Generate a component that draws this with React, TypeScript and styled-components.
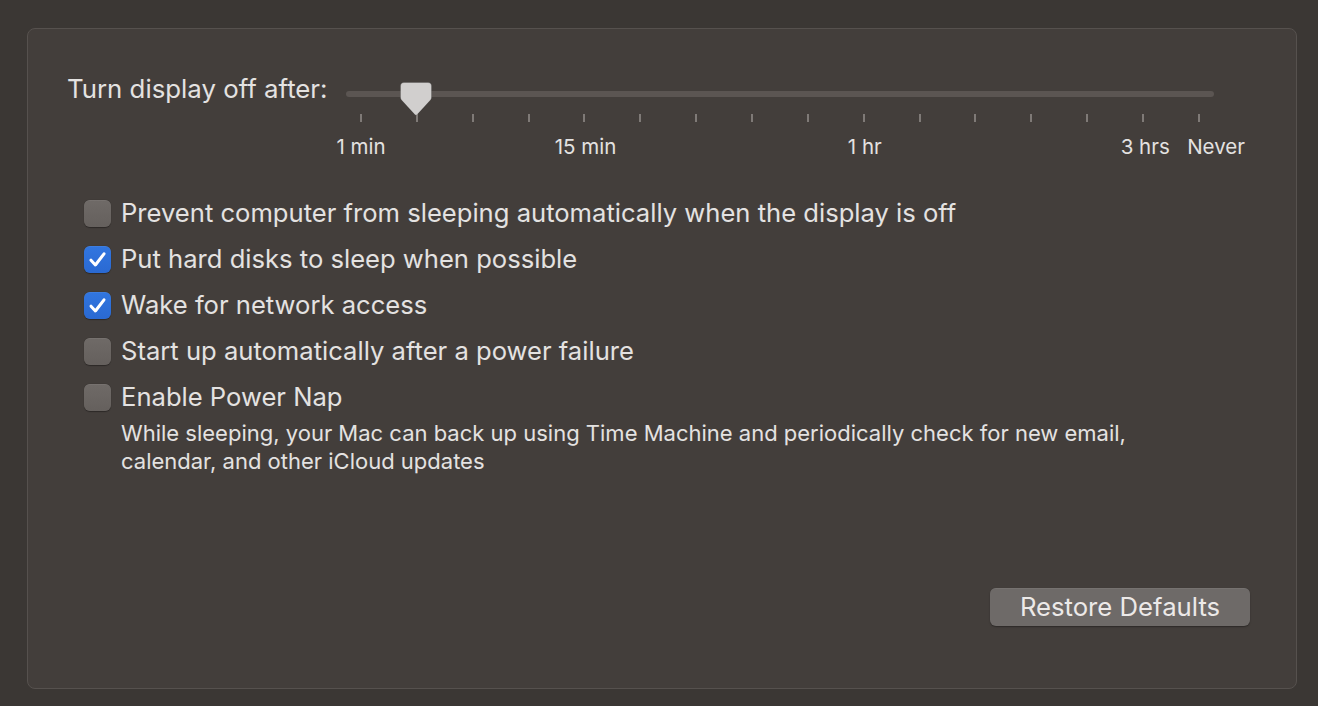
import React from "react";
import styled, { createGlobalStyle } from "styled-components";

const Global = createGlobalStyle`
  html, body { margin: 0; padding: 0; background: #3b3734; }
  body { font-family: Inter, "Noto Sans", sans-serif; color: #e4e2e1; -webkit-font-smoothing: antialiased; }
  * { box-sizing: border-box; }
`;

const Page = styled.div`
  width: 1318px;
  height: 706px;
  padding: 28px 21px 17px 27px;
  background: #3b3734;
  display: flex;
`;

const Panel = styled.section`
  flex: 1;
  display: flex;
  flex-direction: column;
  background: #433e3b;
  border: 1px solid #56514e;
  border-radius: 8px;
  padding: 46px 46px 62px 39px;
`;

const SliderRow = styled.div`
  display: flex;
  align-items: flex-start;
`;

const SliderLabel = styled.div`
  width: 279px;
  font-size: 25.8px;
  line-height: 28px;
  white-space: nowrap;
`;

const Slider = styled.div`
  position: relative;
  width: 868px;
  height: 80px;
  margin-top: 5px;
`;

const Track = styled.div`
  margin-top: 11px;
  height: 6px;
  border-radius: 3px;
  background: #5b5552;
`;

const Ticks = styled.div`
  display: flex;
  justify-content: space-between;
  width: 840px;
  margin: 17px 0 0 14px;
`;

const Tick = styled.span`
  width: 2px;
  height: 8px;
  background: #7f7a77;
`;

const TickLabel = styled.span`
  position: absolute;
  top: 55px;
  transform: translateX(-50%);
  font-size: 20.5px;
  line-height: 24px;
  white-space: nowrap;
  color: #e4e2e1;
`;

const Thumb = styled.svg`
  position: absolute;
  left: 54px;
  top: 2px;
  width: 32px;
  height: 34px;
  overflow: visible;
`;

const CheckList = styled.div`
  display: flex;
  flex-direction: column;
  margin: 30px 0 0 17px;
`;

const Row = styled.label`
  display: flex;
  align-items: center;
  height: 46px;
  gap: 10px;
  font-size: 25.6px;
  white-space: nowrap;
`;

const RowText = styled.span`
  margin-top: -2px;
`;

const Box = styled.span<{ $checked?: boolean }>`
  width: 27px;
  height: 27px;
  border-radius: 6px;
  display: flex;
  align-items: center;
  justify-content: center;
  flex: none;
  background: ${(p) =>
    p.$checked
      ? "linear-gradient(#3176e0, #2a69d2)"
      : "linear-gradient(#6f6a67, #65605d)"};
  box-shadow: 0 0.5px 1px rgba(0, 0, 0, 0.35), inset 0 0.5px 0 rgba(255, 255, 255, 0.12);
`;

const Description = styled.p`
  margin: -1px 0 0 37px;
  font-size: 22px;
  line-height: 28px;
  color: #e4e2e1;
  white-space: nowrap;
`;

const Footer = styled.div`
  margin-top: auto;
  display: flex;
  justify-content: flex-end;
`;

const Button = styled.button`
  width: 260px;
  height: 38px;
  border: none;
  border-radius: 6px;
  background: #6e6a68;
  color: #ece9e8;
  font-family: inherit;
  font-size: 25.7px;
  line-height: 38px;
  padding: 0;
  box-shadow: 0 1px 1.5px rgba(0, 0, 0, 0.35), inset 0 0.5px 0 rgba(255, 255, 255, 0.12);
`;

const TICK_COUNT = 16;
const TICK_START = 15;
const TICK_STEP = 55.87;
const labels = [
  { text: "1 min", tick: 0, dx: 0 },
  { text: "15 min", tick: 4, dx: 1 },
  { text: "1 hr", tick: 9, dx: 1 },
  { text: "3 hrs", tick: 14, dx: 2 },
  { text: "Never", tick: 15, dx: 17 },
];

const options = [
  { text: "Prevent computer from sleeping automatically when the display is off", checked: false },
  { text: "Put hard disks to sleep when possible", checked: true },
  { text: "Wake for network access", checked: true },
  { text: "Start up automatically after a power failure", checked: false },
  { text: "Enable Power Nap", checked: false },
];

const Check = () => (
  <svg width="27" height="27" viewBox="0 0 27 27">
    <path d="M7 14.2 L11.4 19 L20 7.8" fill="none" stroke="#fff" strokeWidth="3" strokeLinecap="round" strokeLinejoin="round" />
  </svg>
);

export default function App() {
  return (
    <>
      <Global />
      <Page>
        <Panel>
          <SliderRow>
            <SliderLabel>Turn display off after:</SliderLabel>
            <Slider>
              <Track />
              <Ticks>
                {Array.from({ length: TICK_COUNT }).map((_, i) => (
                  <Tick key={i} />
                ))}
              </Ticks>
              {labels.map((l) => (
                <TickLabel key={l.text} style={{ left: TICK_START + l.tick * TICK_STEP + l.dx }}>
                  {l.text}
                </TickLabel>
              ))}
              <Thumb viewBox="0 0 32 34">
                <path
                  d="M4 0.5 H28 A3.5 3.5 0 0 1 31.5 4 V15.5 Q31.5 17 30.3 18.2 L17.2 32.6 Q16 33.8 14.8 32.6 L1.7 18.2 Q0.5 17 0.5 15.5 V4 A3.5 3.5 0 0 1 4 0.5 Z"
                  fill="#d1cfce"
                  stroke="rgba(0,0,0,0.25)"
                  strokeWidth="0.6"
                />
              </Thumb>
            </Slider>
          </SliderRow>
          <CheckList>
            {options.map((o) => (
              <Row key={o.text}>
                <Box $checked={o.checked}>{o.checked && <Check />}</Box>
                <RowText>{o.text}</RowText>
              </Row>
            ))}
            <Description>
              While sleeping, your Mac can back up using Time Machine and periodically check for new email,
              <br />
              calendar, and other iCloud updates
            </Description>
          </CheckList>
          <Footer>
            <Button>Restore Defaults</Button>
          </Footer>
        </Panel>
      </Page>
    </>
  );
}
